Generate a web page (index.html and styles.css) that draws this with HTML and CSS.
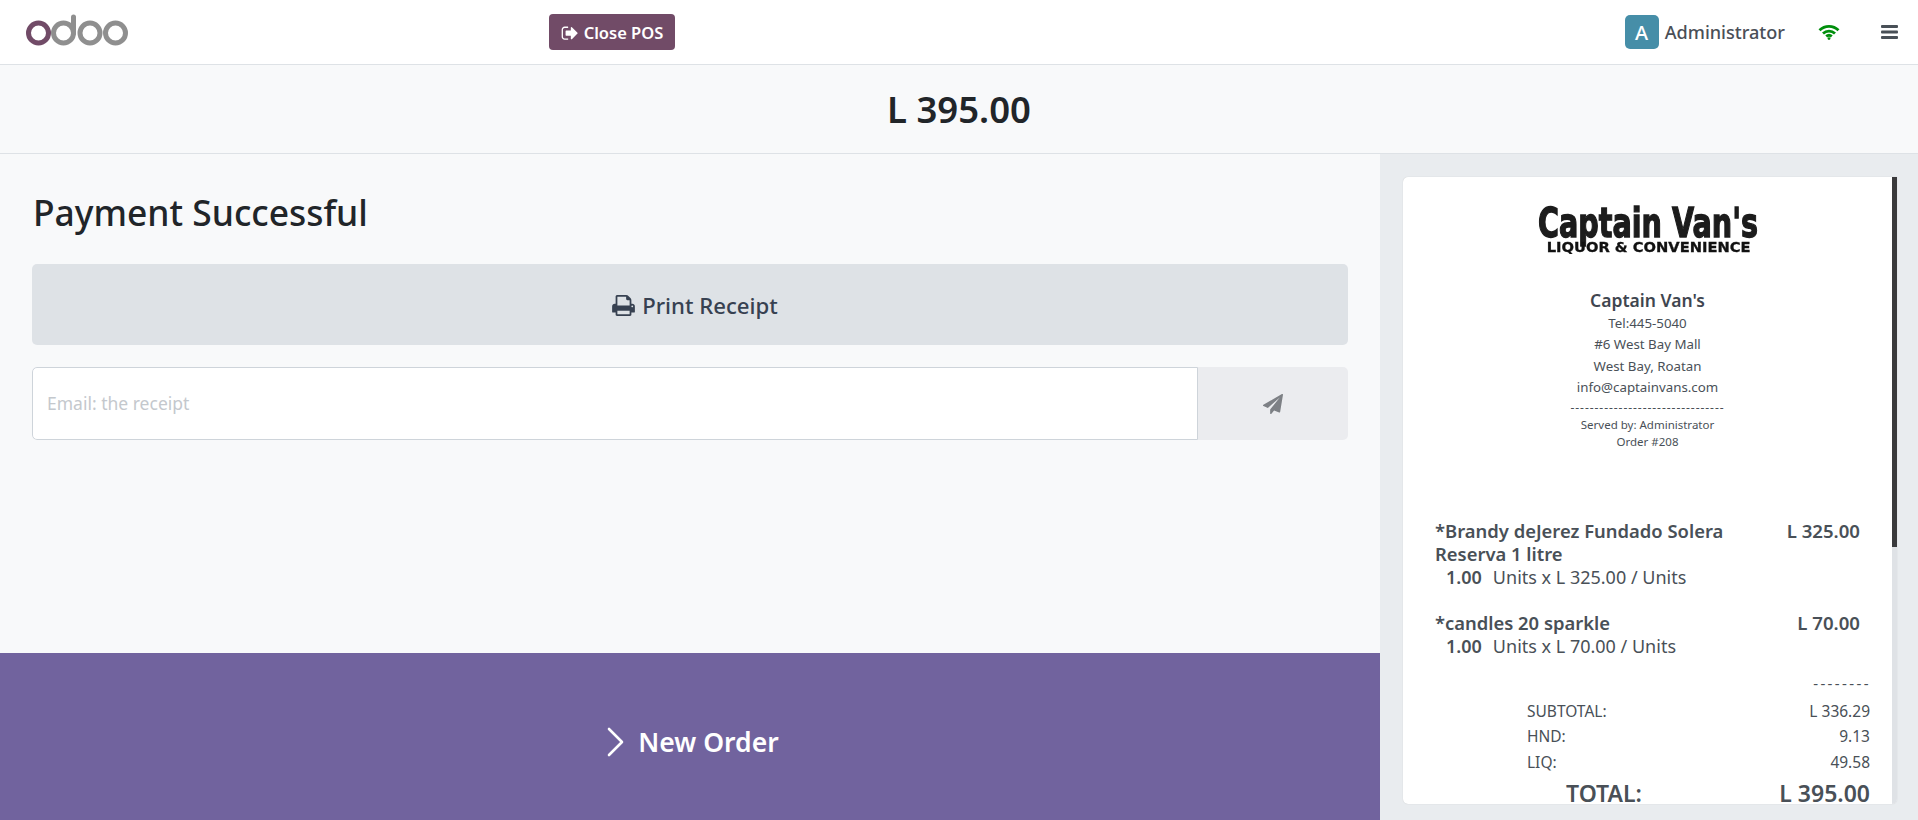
FILE: index.html
```html
<!DOCTYPE html>
<html lang="en">
<head>
<meta charset="utf-8">
<title>Point of Sale</title>
<link rel="stylesheet" href="styles.css">
</head>
<body>
<div class="app">
  <header class="topbar">
    <div class="brand">
      <svg class="odoo-logo" viewBox="0 0 104 36" aria-label="odoo">
        <circle class="ring ring-purple" cx="12.5" cy="20" r="10"/>
        <circle class="ring" cx="37.5" cy="20" r="10"/>
        <line class="ring" x1="47.5" y1="20" x2="47.5" y2="4" stroke-linecap="round"/>
        <circle class="ring" cx="64" cy="20" r="10"/>
        <circle class="ring" cx="89.5" cy="20" r="10"/>
      </svg>
    </div>
    <button class="close-pos">
      <svg class="ico-signout" viewBox="0 0 1664 1408"><path d="M704 1312q0 4 1 20t.5 26.5-3 23.5-10 19.5-20.5 6.5h-320q-119 0-203.5-84.5t-84.5-203.5v-704q0-119 84.5-203.5t203.5-84.5h320q13 0 22.5 9.5t9.5 22.5q0 4 1 20t.5 26.5-3 23.5-10 19.5-20.5 6.5h-320q-66 0-113 47t-47 113v704q0 66 47 113t113 47h312l11.5 1 11.5 3 8 5.5 7 9 2 13.5zm928-544q0 26-19 45l-544 544q-19 19-45 19t-45-19-19-45v-288h-448q-26 0-45-19t-19-45v-384q0-26 19-45t45-19h448v-288q0-26 19-45t45-19 45 19l544 544q19 19 19 45z"/></svg>
      <span>Close POS</span>
    </button>
    <div class="spacer"></div>
    <div class="user">
      <span class="avatar">A</span>
      <span class="user-name">Administrator</span>
    </div>
    <svg class="ico-wifi" viewBox="0 0 22 16">
      <path d="M1.5 6.2C6.8 1 15.2 1 20.5 6.2"/>
      <path d="M5 9.6c3.4-3.2 8.6-3.2 12 0"/>
      <path d="M8.2 12.4c1.7-1.4 3.9-1.4 5.6 0"/>
      <circle class="wifi-dot" cx="11" cy="14.6" r="1.4"/>
    </svg>
    <svg class="ico-bars" viewBox="0 0 17 14">
      <rect x="0" y="0" width="17" height="3" rx="1"/>
      <rect x="0" y="5.5" width="17" height="3" rx="1"/>
      <rect x="0" y="11" width="17" height="3" rx="1"/>
    </svg>
  </header>

  <div class="amount-band">L 395.00</div>

  <main class="screen">
    <section class="left">
      <div class="left-body">
        <h1 class="title">Payment Successful</h1>
        <button class="print-btn">
          <svg class="ico-print" viewBox="0 0 1664 1536"><path d="M384 1408h896v-256h-896v256zm0-640h896v-384h-160q-40 0-68-28t-28-68v-160h-640v640zm1152 64q0-26-19-45t-45-19-45 19-19 45 19 45 45 19 45-19 19-45zm128 0v416q0 13-9.5 22.5t-22.5 9.5h-224v160q0 40-28 68t-68 28h-960q-40 0-68-28t-28-68v-160h-224q-13 0-22.5-9.5t-9.5-22.5v-416q0-79 56.5-135.5t135.5-56.5h64v-544q0-40 28-68t68-28h672q40 0 88 20t76 48l152 152q28 28 48 76t20 88v256h64q79 0 135.5 56.5t56.5 135.5z"/></svg>
          <span>Print Receipt</span>
        </button>
        <div class="email-row">
          <div class="email-input">Email: the receipt</div>
          <div class="email-send">
            <svg class="ico-plane" viewBox="0 0 1792 1792"><path d="M1764 11q33 24 27 64l-256 1536q-5 29-32 45-14 8-31 8-11 0-24-5l-453-185-242 295q-18 23-49 23-13 0-22-4-19-7-30.5-23.5t-11.5-36.5v-349l864-1059-1069 925-395-162q-37-14-40-55-2-40 32-59l1664-960q15-9 32-9 20 0 36 11z"/></svg>
          </div>
        </div>
      </div>
      <button class="new-order">
        <svg class="ico-chevron" viewBox="0 0 18 30"><path d="M2 2l13 13L2 28"/></svg>
        <span>New Order</span>
      </button>
    </section>

    <aside class="right">
      <div class="receipt-card">
        <div class="receipt">
          <div class="receipt-logo">
            <svg class="store-logo" viewBox="0 0 330 54" preserveAspectRatio="none">
              <text class="logo-main" x="0" y="37" textLength="330" lengthAdjust="spacingAndGlyphs">Captain Van's</text>
              <text class="logo-sub" x="13" y="52" textLength="306" lengthAdjust="spacingAndGlyphs">LIQUOR &amp; CONVENIENCE</text>
            </svg>
          </div>
          <div class="store">
            <div class="store-name">Captain Van's</div>
            <div class="store-line">Tel:445-5040</div>
            <div class="store-line">#6 West Bay Mall</div>
            <div class="store-line">West Bay, Roatan</div>
            <div class="store-line">info@captainvans.com</div>
            <div class="store-dash">--------------------------------</div>
            <div class="store-small">Served by: Administrator</div>
            <div class="store-small">Order #208</div>
          </div>
          <div class="lines">
            <div class="line-item">
              <div class="line-head">
                <div class="line-name">*Brandy deJerez Fundado Solera Reserva 1 litre</div>
                <div class="line-price">L 325.00</div>
              </div>
              <div class="line-qty"><b>1.00</b><span>Units x L 325.00 / Units</span></div>
            </div>
            <div class="line-item">
              <div class="line-head">
                <div class="line-name">*candles 20 sparkle</div>
                <div class="line-price">L 70.00</div>
              </div>
              <div class="line-qty"><b>1.00</b><span>Units x L 70.00 / Units</span></div>
            </div>
          </div>
          <div class="sum-dash">--------</div>
          <div class="sum-row"><span>SUBTOTAL:</span><span>L 336.29</span></div>
          <div class="sum-row"><span>HND:</span><span>9.13</span></div>
          <div class="sum-row"><span>LIQ:</span><span>49.58</span></div>
          <div class="total-row"><span>TOTAL:</span><span>L 395.00</span></div>
        </div>
        <div class="scroll-track"><div class="scroll-thumb"></div></div>
      </div>
    </aside>
  </main>
</div>
</body>
</html>
```

FILE: styles.css
```css
* { box-sizing: border-box; }
html, body { margin: 0; padding: 0; height: 100%; overflow: hidden; }
body { font-family: "Noto Sans", "Open Sans", sans-serif; color: #374151; background: #f8f9fa; }
button { font-family: inherit; border: 0; cursor: pointer; }

.app { display: flex; flex-direction: column; width: 1918px; height: 820px; }

.topbar {
  display: flex; align-items: center; height: 65px; flex: none;
  background: #fff; border-bottom: 1px solid #dee2e6;
}
.brand { width: 549px; padding-left: 25.5px; display: flex; align-items: center; }
.odoo-logo { width: 104px; height: 36px; margin-top: -3px; }
.ring { fill: none; stroke: #8f8f8f; stroke-width: 5; }
.ring-purple { stroke: #714b67; }

.close-pos {
  display: flex; align-items: center; justify-content: center; gap: 6px;
  width: 126px; height: 36px; background: #714b67; color: #fff; border-radius: 4px;
  font-size: 16.5px; font-weight: 600;
}
.ico-signout { width: 17px; height: 15px; fill: #fff; }
.spacer { flex: 1; }
.user { display: flex; align-items: center; gap: 6px; }
.avatar {
  width: 34px; height: 34px; border-radius: 5px; background: #468ea8; color: #fff;
  display: flex; align-items: center; justify-content: center; font-size: 20px; font-weight: 500;
}
.user-name { font-size: 18.1px; font-weight: 500; color: #4a4f57; }
.ico-wifi { width: 22px; height: 16px; margin-left: 33px; fill: none; stroke: #008f0c; stroke-width: 2.8; }
.wifi-dot { fill: #008f0c; stroke: none; }
.ico-bars { width: 17px; height: 14px; margin-left: 41px; margin-right: 20px; fill: #495057; }

.amount-band {
  height: 89px; flex: none; display: flex; align-items: center; justify-content: center;
  border-bottom: 1px solid #dee2e6; background: #f8f9fa;
  font-size: 36.5px; font-weight: 600; color: #212529;
}

.screen { flex: 1; display: flex; min-height: 0; }

.left { width: 1380px; display: flex; flex-direction: column; }
.left-body { flex: 1; padding: 31px 32px 0; }
.title { margin: 0 0 25px 1px; font-size: 35.4px; line-height: 54px; font-weight: 500; color: #212529; }
.print-btn {
  display: flex; align-items: center; justify-content: center; gap: 7px;
  width: 100%; height: 81px; border-radius: 5px; background: #dee2e6; color: #374151;
  font-size: 22.2px; font-weight: 500; padding: 2px 0 0 10px;
}
.ico-print { width: 23px; height: 21px; fill: #374151; }
.email-row { display: flex; height: 73px; margin-top: 22px; border-radius: 5px; background: #ebecef; overflow: hidden; }
.email-input {
  flex: 1; background: #fff; border: 1px solid #ced4da; border-radius: 5px 0 0 5px;
  display: flex; align-items: center; padding: 0 0 2px 14px; font-size: 17.5px; color: #c4c8cd;
}
.email-send { width: 150px; display: flex; align-items: center; justify-content: center; }
.ico-plane { width: 20px; height: 20px; fill: #7d8085; }

.new-order {
  height: 167px; flex: none; display: flex; align-items: center; justify-content: center; gap: 13px;
  background: #71639e; color: #fff; font-size: 26.5px; font-weight: 600; padding: 11px 0 0 6px;
}
.ico-chevron { width: 18px; height: 30px; fill: none; stroke: #fff; stroke-width: 2.6; stroke-linecap: round; stroke-linejoin: round; }

.right { flex: 1; background: #e9ecef; padding: 23px 21px 16px 23px; min-width: 0; }
.receipt-card {
  display: flex; height: 100%; background: #fff; border-radius: 5px 0 5px 5px; overflow: hidden;
  box-shadow: 0 0 1px rgba(0,0,0,.2);
}
.receipt { flex: 1; min-width: 0; overflow: hidden; padding: 23px 23px 0 32px; color: #495057; }
.scroll-track { width: 5px; flex: none; background: #dfe2e6; }
.scroll-thumb { height: 370px; background: #3a3a3c; }

.receipt-logo { display: flex; justify-content: center; margin-right: 8px; }
.store-logo { width: 220px; height: 54px; display: block; filter: blur(.4px); }
.logo-main { font-family: "DejaVu Sans", sans-serif; font-weight: 700; font-size: 40px; fill: #1c1c1c; stroke: #1c1c1c; stroke-width: 1.4; }
.logo-sub { font-family: "DejaVu Sans", sans-serif; font-weight: 700; font-size: 14px; fill: #111; stroke: #111; stroke-width: .3; }

.store { margin: 34px 9px 0 0; text-align: center; }
.store-name { font-size: 17.5px; font-weight: 600; line-height: 25px; color: #3f4650; }
.store-line { font-size: 13.3px; line-height: 21.4px; }
.store-dash { font-size: 12px; line-height: 17px; letter-spacing: .95px; }
.store-small { font-size: 11.5px; line-height: 17.5px; }

.lines { margin-top: 68px; }
.line-item { margin-bottom: 21px; line-height: 23.4px; }
.line-head { display: flex; justify-content: space-between; padding-right: 9px; }
.line-name { width: 300px; font-weight: 600; font-size: 18.4px; }
.line-price { font-weight: 600; font-size: 18.6px; }
.line-qty { padding-left: 11px; font-size: 18px; margin-top: 1px; }
.line-qty b { font-weight: 600; margin-right: 11px; }

.sum-dash { text-align: right; font-size: 15px; line-height: 26px; margin: -10px -2px 0 0; letter-spacing: 2.4px; }
.sum-row { display: flex; justify-content: space-between; margin: 0 -1px 0 92px; font-size: 15.5px; line-height: 25.7px; }
.sum-dash + .sum-row { margin-top: 3px; }
.total-row { display: flex; justify-content: space-between; margin: 6px -1px 0 131px; font-size: 23px; font-weight: 600; line-height: 23px; }
```
